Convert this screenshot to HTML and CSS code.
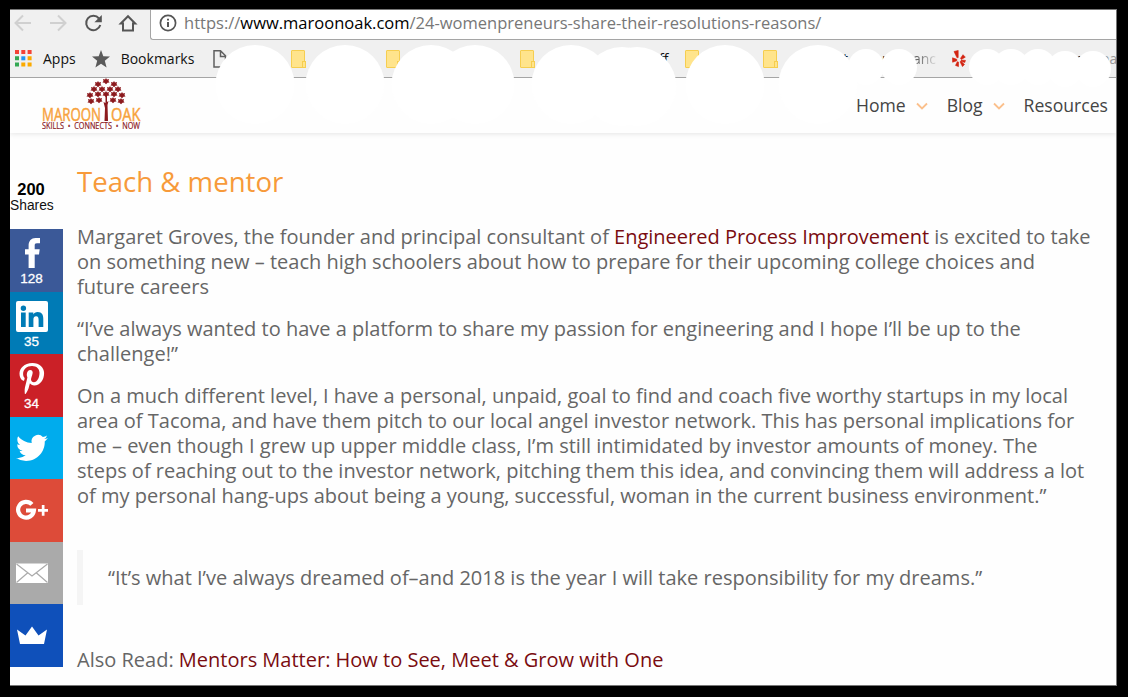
FILE: index.html
```html
<!DOCTYPE html>
<html lang="en">

<head>
  <meta charset="UTF-8">
  <meta name="viewport" content="width=device-width, initial-scale=1.0">
  <title>24 Womenpreneurs Share Their Resolutions</title>
  <link rel="stylesheet" href="styles.css">
</head>

<body>
  <div class="window">
    <!-- Address bar -->
    <div class="toolbar">
      <div class="nav-buttons">
        <svg width="140" height="29" viewBox="10 10 140 29" fill="none" stroke-width="2">
          <path d="M31 23H16M23 15.500l-7.500 7.500 7.500 7.500M50 23h15M58 15.500l7.500 7.500-7.500 7.500" stroke="#d0d0d0"/>
          <path d="M99 18.500A7.200 7.200 0 1 0 100.300 25" stroke="#555"/>
          <path d="M101.800 15v7.200h-7.400z" fill="#555"/>
          <path d="M120.800 23.500l7.200-7.300 7.200 7.300h-2.200v7h-10v-7z" stroke="#555"/>
        </svg>
      </div>
      <div class="address">
        <svg width="18" height="18" viewBox="0 0 18 18" fill="none" stroke="#555" stroke-width="1.700">
          <circle cx="9" cy="9" r="7.600"/>
          <path d="M9 8v5M9 4.800v1.800" stroke-width="2"/>
        </svg>
        <span class="url">https://<b>www.maroonoak.com</b>/24-womenpreneurs-share-their-resolutions-reasons/</span>
      </div>
    </div>

    <!-- Bookmarks bar -->
    <div class="bookmarks">
      <svg class="apps-icon" width="17" height="17" viewBox="0 0 17 17">
        <path d="M0 0h4v4H0zM6.300 0h4v4h-4zM12.600 0h4v4h-4z" fill="#f44336"/>
        <path d="M0 6.300h4v4H0zM0 12.600h4v4H0z" fill="#34a853"/>
        <path d="M6.300 6.300h4v4h-4z" fill="#2196f3"/>
        <path d="M12.600 6.300h4v4h-4zM6.300 12.600h4v4h-4zM12.600 12.600h4v4h-4z" fill="#fbaa00"/>
      </svg>
      <span class="apps-label">Apps</span>
      <svg class="star-icon" width="18" height="18" viewBox="0 0 18 18">
        <path d="M9 0l2.300 6.300 6.700.3-5.200 4.200L14.600 17.500 9 13.700l-5.600 3.800 1.800-6.700L0 6.600l6.700-.3z" fill="#5a5a5a"/>
      </svg>
      <span class="bookmarks-label">Bookmarks</span>

      <svg class="mark" style="left: 203px" width="14" height="18" viewBox="0 0 14 18" fill="none" stroke="#5f5f5f" stroke-width="1.500">
        <path d="M1 .8h6.500l5 5V17H1zM7.500 1v5.500H13"/>
      </svg>
      <span class="folder" style="left: 281px"></span>
      <span class="folder" style="left: 376px"></span>
      <span class="folder" style="left: 510px"></span>
      <span class="bit" style="left: 587px">r</span>
      <span class="bit" style="left: 649px">ff</span>
      <span class="folder" style="left: 675px"></span>
      <span class="folder" style="left: 753px"></span>
      <span class="bit" style="left: 833px">t</span>
      <span class="bit" style="left: 872px">m</span>
      <span class="bit fade" style="left: 903px">anc</span>
      <svg class="mark" style="left: 942px" width="14" height="18" viewBox="0 0 14 18" fill="#d32311" stroke="#d32311" stroke-width="0.600" stroke-linejoin="round">
        <path d="M2 1.500L6.200.4v7.200L5 7.800zM.5 7.800l4.300 1.500v1.500L.6 12.200zM5.300 11.700l1.200.4v4.500l-3-1.200zM8 11.800l1-.6 3.500 3.200-2 2.200zM8.500 8.300L11 4.700l2.300 2.500-4.100 2.200zM9.200 10l4.300.4-.8 2.200-3.500-1.400z"/>
      </svg>
      <span class="bit" style="left: 1065px">r</span>
      <span class="bit gray" style="left: 1091px">na</span>
    </div>

    <!-- Site header -->
    <div class="site-header">
      <svg class="logo" width="100" height="54" viewBox="0 0 100 54">
        <g fill="#8c1a1e">
          <path id="leaf" d="M64 0l1 1.500 2-.5-.5 2 1 1.500-2 .2L64 6.200l-1.500-1.500-2-.2 1-1.500-.5-2 2 .5z"/>
          <use href="#leaf" x="-8" y="3"/>
          <use href="#leaf" x="8" y="3"/>
          <use href="#leaf" x="-12" y="8"/>
          <use href="#leaf" x="-4" y="8"/>
          <use href="#leaf" x="4" y="8"/>
          <use href="#leaf" x="12" y="8"/>
          <use href="#leaf" x="-16" y="14"/>
          <use href="#leaf" x="-8" y="13"/>
          <use href="#leaf" x="0" y="13"/>
          <use href="#leaf" x="8" y="13"/>
          <use href="#leaf" x="16" y="14"/>
          <use href="#leaf" x="-15" y="20"/>
          <use href="#leaf" x="-7" y="19"/>
          <use href="#leaf" x="7" y="19"/>
          <use href="#leaf" x="15" y="20"/>
          <path d="M63.500 18h1.500v6l1.500-1-1 4 .5 16h-3.500l.5-13-1.500-6 2 1z"/>
        </g>
        <text class="logo-name" x="0" y="42.500" textLength="59" lengthAdjust="spacingAndGlyphs">MAROON</text>
        <text class="logo-name" x="69" y="42.500" textLength="29.500" lengthAdjust="spacingAndGlyphs">OAK</text>
        <text class="logo-tag" x="0" y="50.500" textLength="98" lengthAdjust="spacingAndGlyphs" xml:space="preserve">SKILLS  •  CONNECTS  •  NOW</text>
      </svg>
      <div class="menu">
        <span>Home</span>
        <svg width="12" height="8" viewBox="0 0 12 8"><path d="M1 1.500l5 5 5-5"/></svg>
        <span>Blog</span>
        <svg width="12" height="8" viewBox="0 0 12 8"><path d="M1 1.500l5 5 5-5"/></svg>
        <span>Resources</span>
      </div>
    </div>

    <div class="page">
      <!-- Share buttons -->
      <div class="shares">
        <div class="total"><b>200</b><span>Shares</span></div>
        <div class="share facebook">
          <svg width="32" height="32" viewBox="0 0 32 32"><path d="M12.600 31V17.500H9v-5.200h3.600V8.500C12.600 4 15.300 1 19.500 1H24v5.200h-3c-1.900 0-2.300.9-2.300 2.300v3.800h5l-.7 5.200h-4.300V31z"/></svg>
          <span>128</span>
        </div>
        <div class="share linkedin">
          <svg width="32" height="32" viewBox="0 0 32 32"><path fill-rule="evenodd" d="M2 1h28a2 2 0 0 1 2 2v27a2 2 0 0 1-2 2H2a2 2 0 0 1-2-2V3a2 2 0 0 1 2-2zM5 12.500V27h4.700V12.500zM7.400 5.500a2.700 2.700 0 1 0 0 5.400 2.700 2.700 0 0 0 0-5.400zM12.700 12.500V27h4.700v-7.300c0-2 .7-3.500 2.700-3.500s2.500 1.600 2.500 3.700V27h4.700v-8c0-4-1.200-6.900-5.600-6.900-2.200 0-3.700 1.100-4.400 2.400v-2z"/></svg>
          <span>35</span>
        </div>
        <div class="share pinterest">
          <svg width="32" height="32" viewBox="0 0 32 32"><path d="M16.500 1C8 1 3.500 6.500 3.500 11.700c0 3.100 1.200 5.900 3.800 7 .4.200.8 0 .9-.5l.4-1.500c.1-.5.100-.6-.3-1.100-.7-.9-1.200-2-1.200-3.600C7.100 7.500 10.700 4 16 4c4.700 0 7.500 2.900 7.500 6.800 0 5.100-2.300 9.400-5.600 9.400-1.900 0-3.200-1.500-2.800-3.400.5-2.200 1.600-4.600 1.600-6.200 0-1.500-.8-2.700-2.400-2.700-1.900 0-3.500 2-3.500 4.700 0 1.700.6 2.900.6 2.900L9 25.300c-.7 2.900-.1 6.500-.1 6.800 0 .2.300.3.400.1.200-.2 2.500-3.100 3.300-6l1.300-5c.6 1.200 2.500 2.300 4.400 2.300 5.800 0 9.800-5.300 9.800-12.400C28.100 5.700 23.500 1 16.500 1z"/></svg>
          <span>34</span>
        </div>
        <div class="share twitter">
          <svg width="32" height="32" viewBox="0 0 24 24"><path d="M23.950 4.570a10 10 0 0 1-2.820.770 4.960 4.960 0 0 0 2.160-2.720c-.950.550-2 .950-3.130 1.180a4.920 4.920 0 0 0-8.380 4.480C7.690 8.090 4.070 6.130 1.640 3.160a4.820 4.820 0 0 0-.670 2.480c0 1.710.870 3.210 2.190 4.100a4.900 4.900 0 0 1-2.230-.620v.060a4.920 4.920 0 0 0 3.950 4.830 5 5 0 0 1-2.210.080 4.940 4.940 0 0 0 4.600 3.420A9.870 9.870 0 0 1 0 19.540a13.990 13.990 0 0 0 7.560 2.210c9.050 0 14-7.500 14-13.980 0-.210 0-.420-.020-.630a9.940 9.940 0 0 0 2.410-2.570z"/></svg>
        </div>
        <div class="share google">
          <svg width="32" height="32" viewBox="0 0 32 32" fill="none" stroke-width="4.200"><path class="line" d="M15.900 10.400A7.900 7.900 0 1 0 17.900 16.500H10"/><path d="M22 15h3.800v-4h2.700v4h3.500v2.700h-3.500v4h-2.700v-4H22z"/></svg>
        </div>
        <div class="share mail">
          <svg width="32" height="32" viewBox="0 0 32 32"><path d="M0 6.500h32V26H0z"/><path class="crease" d="M.5 7l15.500 12L31.500 7M.5 25.500l11-9.500M31.500 25.500l-11-9.500"/></svg>
        </div>
        <div class="share sumo">
          <svg width="32" height="32" viewBox="0 0 32 32"><path d="M1 10.500l8.500 6L16 7.500l6.500 9 8.500-6L28 25H4z"/></svg>
        </div>
      </div>

      <div class="article">
        <h2>Teach &amp; mentor</h2>
        <p>Margaret Groves, the founder and principal consultant of <a>Engineered Process Improvement</a> is excited to take<br>on something new – teach high schoolers about how to prepare for their upcoming college choices and<br>future careers</p>
        <p>“I’ve always wanted to have a platform to share my passion for engineering and I hope I’ll be up to the<br>challenge!”</p>
        <p>On a much different level, I have a personal, unpaid, goal to find and coach five worthy startups in my local<br>area of Tacoma, and have them pitch to our local angel investor network. This has personal implications for<br>me – even though I grew up upper middle class, I’m still intimidated by investor amounts of money. The<br>steps of reaching out to the investor network, pitching them this idea, and convincing them will address a lot<br>of my personal hang-ups about being a young, successful, woman in the current business environment.”</p>
        <blockquote>“It’s what I’ve always dreamed of–and 2018 is the year I will take responsibility for my dreams.”</blockquote>
        <p>Also Read: <a>Mentors Matter: How to See, Meet &amp; Grow with One</a></p>
      </div>
    </div>

    <!-- White blobs over the bookmark names -->
    <svg class="blobs" width="1106" height="136" viewBox="10 0 1106 136" fill="#fff">
      <circle cx="255" cy="84.500" r="39.500"/>
      <circle cx="345" cy="84.500" r="39.500"/>
      <circle cx="431" cy="84.500" r="39.500"/>
      <circle cx="475" cy="84.500" r="39.500"/>
      <circle cx="571" cy="84.500" r="39.500"/>
      <circle cx="622" cy="86.500" r="39.500"/>
      <circle cx="637" cy="86.500" r="39.500"/>
      <circle cx="725" cy="84.500" r="39.500"/>
      <circle cx="818" cy="84.500" r="39.500"/>
      <circle cx="866" cy="67" r="18"/>
      <circle cx="899" cy="67" r="18"/>
      <circle cx="987" cy="67" r="18"/>
      <circle cx="1011" cy="67" r="18"/>
      <circle cx="1038" cy="67" r="18"/>
      <circle cx="1065" cy="69" r="18"/>
      <circle cx="1093" cy="69" r="18"/>
    </svg>
  </div>
</body>

</html>
```
FILE: styles.css
```css
body {
  margin: 0;
  background: #000;
  font-family: "Open Sans", sans-serif;
}

.window {
  position: relative;
  box-sizing: border-box;
  width: 1107px;
  height: 677px;
  margin: 9px 0 0 10px;
  border-top: 1px solid #777;
  border-right: 1px solid #777;
  border-bottom: 1px solid #777;
  background: #fefefe;
  overflow: hidden;
}

/* Browser */
.toolbar {
  display: flex;
  height: 30px;
  background: #f0f0f0;
}

.nav-buttons {
  width: 140px;
}

.address {
  display: flex;
  flex: 1;
  box-sizing: border-box;
  height: 30px;
  padding-left: 8px;
  border-left: 1px solid #a5a5a5;
  border-bottom: 1px solid #a5a5a5;
  border-bottom-left-radius: 3px;
  background: #fff;
}

.address svg {
  margin-top: 4px;
}

.url {
  margin-left: 7px;
  font-size: 16.530px;
  line-height: 26px;
  color: #777;
  white-space: nowrap;
}

.url b {
  font-weight: normal;
  color: #000;
}

.bookmarks {
  position: relative;
  display: flex;
  align-items: flex-start;
  box-sizing: border-box;
  height: 38px;
  padding-left: 5px;
  border-bottom: 1px solid #a5a5a5;
  background: #f0f0f0;
  font-size: 14px;
  line-height: 18px;
  color: #111;
}

.apps-icon {
  margin-top: 10px;
}

.star-icon {
  margin: 10px 0 0 16px;
}

.apps-label {
  margin: 10px 0 0 11px;
}

.bookmarks-label {
  margin: 10px 0 0 11px;
}

.mark, .folder, .bit {
  position: absolute;
  top: 10px;
}

.folder {
  box-sizing: border-box;
  width: 14px;
  height: 18px;
  border: 1px solid #f6ce50;
  border-radius: 1px;
  background: #ffe48c;
}

.folder::after {
  content: "";
  position: absolute;
  right: -2px;
  bottom: -1px;
  width: 2px;
  height: 5px;
  border: 1px solid #f6ce50;
  background: #ffe48c;
}

.fade {
  background: linear-gradient(to right, #444, #ddd);
  -webkit-background-clip: text;
  background-clip: text;
  color: transparent;
}

.gray {
  color: #999;
}

/* Site header */
.site-header {
  display: flex;
  justify-content: space-between;
  height: 55px;
  padding: 0 8px 0 32px;
  box-shadow: 0 1px 5px rgba(0, 0, 0, 0.1);
}

.logo-name {
  font-size: 19px;
  fill: #f7a23c;
  stroke: #f7a23c;
  stroke-width: 0.5px;
}

.logo-tag {
  font-size: 8.600px;
  fill: #8c1a1e;
  stroke: #8c1a1e;
  stroke-width: 0.2px;
}

.menu {
  position: relative;
  z-index: 1;
  display: flex;
  align-items: center;
  height: 53px;
  font-size: 17.600px;
  color: #444;
}

.menu svg {
  margin: 3px 19px 0 10px;
  fill: none;
  stroke: #fbc08c;
  stroke-width: 1.8;
}

/* Content */
.page {
  display: flex;
}

.shares {
  width: 53px;
  padding-top: 47px;
  font-family: "Liberation Sans", Arial, sans-serif;
}

.total {
  width: 42px;
  height: 49px;
  text-align: center;
  font-size: 13.800px;
  line-height: 16px;
  color: #111;
}

.total b {
  display: block;
  font-size: 16.500px;
  line-height: 18px;
  color: #000;
}

.share {
  box-sizing: border-box;
  height: 62.5px;
  padding: 8px 10px 0 0;
  text-align: center;
  font-size: 13.500px;
  line-height: 20px;
  color: #fff;
  -webkit-text-stroke: 0.3px #fff;
}

.share svg {
  display: block;
  margin-left: 6px;
  fill: #fff;
}

.facebook { background: #3b5998; }
.linkedin { background: #007bb6; }
.pinterest { background: #cb2027; }
.twitter { background: #00aced; }
.google { background: #dd4b39; }
.mail { background: #aaa; }
.sumo { background: #0f50ba; }

.twitter, .google, .mail, .sumo {
  padding-top: 15px;
}

.share .line {
  fill: none;
  stroke: #fff;
}

.share .crease {
  fill: none;
  stroke: #aaa;
  stroke-width: 1.2;
}

.article {
  padding: 31px 0 0 14px;
  font-size: 20.010px;
  line-height: 25px;
  color: #666;
  white-space: nowrap;
}

h2 {
  margin: 0 0 25px;
  font-size: 27.600px;
  font-weight: normal;
  line-height: 35px;
  color: #f79a3a;
}

p {
  margin: 0 0 17px;
}

a {
  color: #7a0c10;
}

blockquote {
  margin: 42px 0;
  padding: 15px 0 15px 25px;
  border-left: 6px solid #f5f5f5;
}

.blobs {
  position: absolute;
  left: 0;
  top: -10px;
}
```
